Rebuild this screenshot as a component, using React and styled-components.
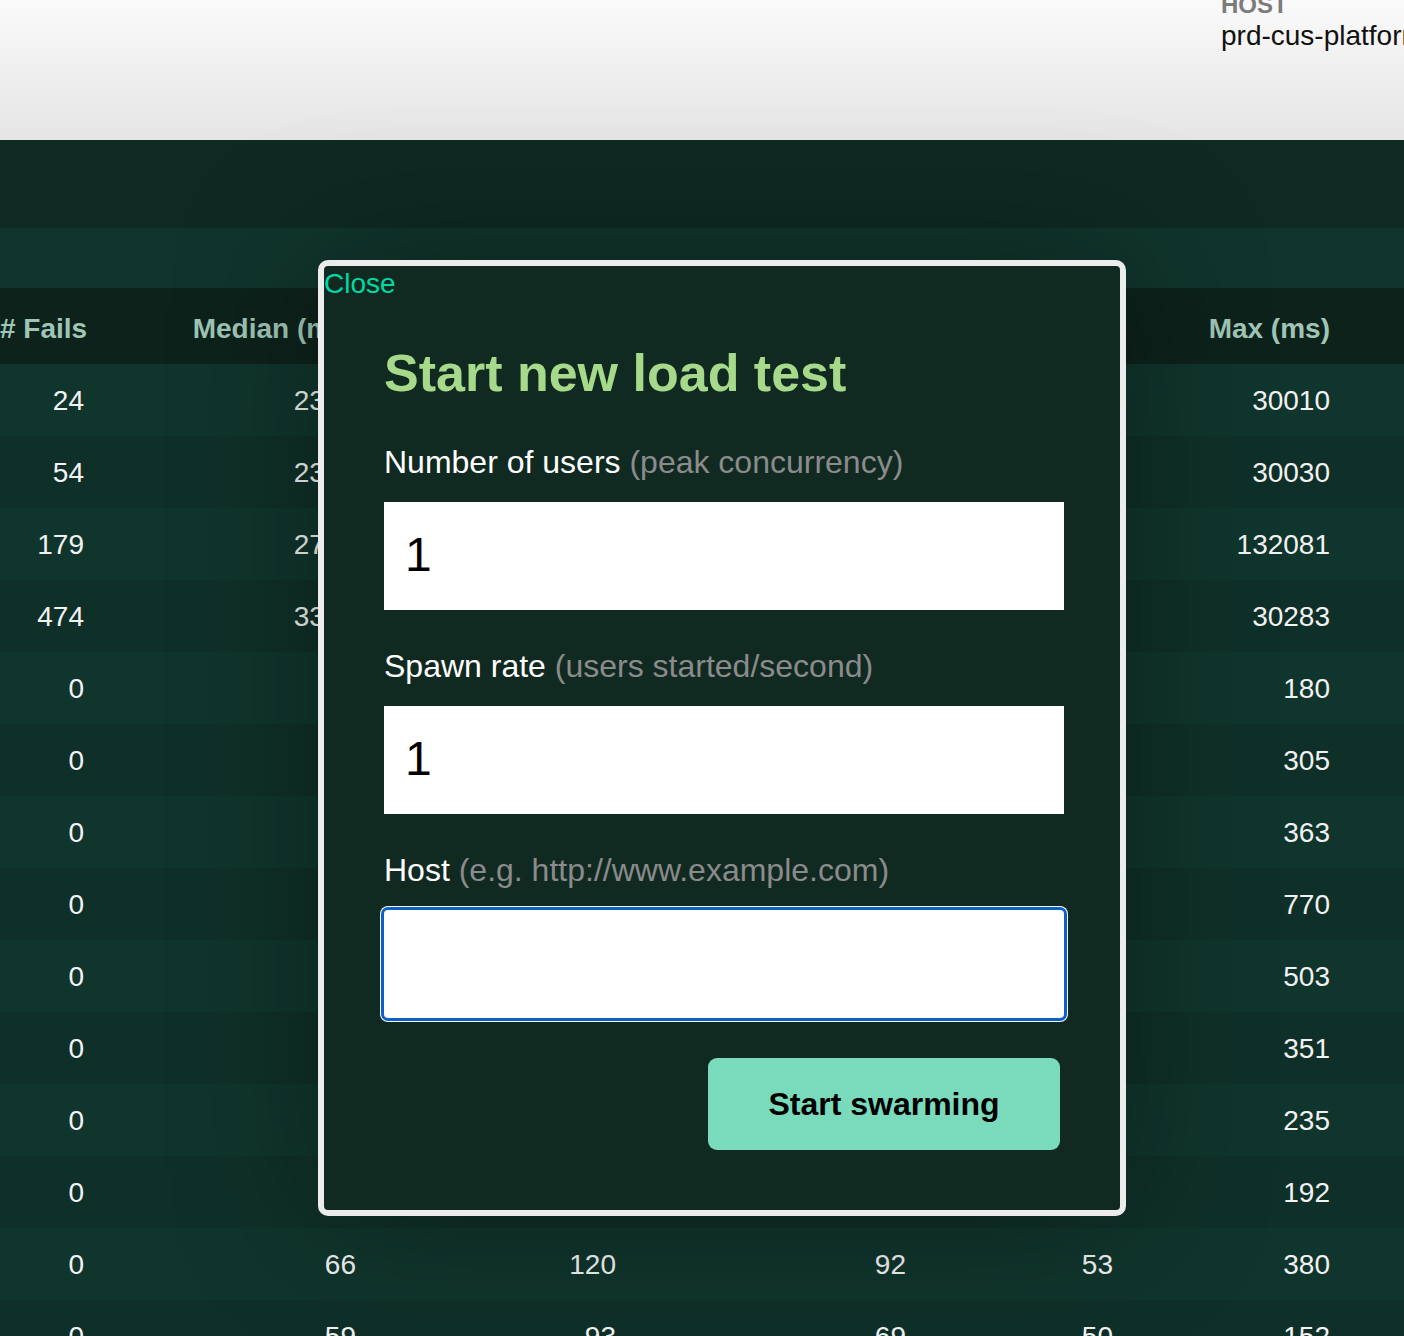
import React from "react";
import styled, { createGlobalStyle } from "styled-components";

const GlobalStyle = createGlobalStyle`
  html, body {
    margin: 0;
    padding: 0;
    background: #0f2a23;
    font-family: "Liberation Sans", Arial, sans-serif;
    overflow: hidden;
  }
`;

const Page = styled.div`
  position: relative;
  width: 1404px;
  height: 1336px;
  overflow: hidden;
`;

const Header = styled.header`
  height: 140px;
  background: linear-gradient(#fafafa, #e5e5e5);
  padding-left: 1221px;
  overflow: hidden;
  white-space: nowrap;
`;

const HostLabel = styled.div`
  margin-top: -7px;
  font-size: 24px;
  line-height: 24px;
  font-weight: bold;
  color: #7b7b7b;
`;

const HostValue = styled.div`
  margin-top: 3px;
  font-size: 28px;
  line-height: 32px;
  color: #111;
`;

const Nav = styled.div`
  height: 88px;
  background: #0f2a23;
`;

const SubBar = styled.div`
  height: 60px;
  background: #10352c;
`;

const cols = "84px 272px 260px 290px 207px 217px 1fr";

const HeadRow = styled.div`
  display: grid;
  grid-template-columns: ${cols};
  box-sizing: border-box;
  height: 76px;
  padding-top: 6px;
  align-items: center;
  background: #0d221b;
`;

const HeadCell = styled.div`
  text-align: right;
  white-space: nowrap;
  font-size: 28px;
  font-weight: bold;
  color: #9fc5b6;
`;

const Row = styled.div`
  display: grid;
  grid-template-columns: ${cols};
  box-sizing: border-box;
  height: 72px;
  padding-top: 2px;
  align-items: center;
  background: ${p => (p.odd ? "#0f3028" : "#10352c")};
`;

const Cell = styled.div`
  text-align: right;
  white-space: nowrap;
  font-size: 28px;
  color: #f2f2f2;
`;

const Modal = styled.div`
  position: absolute;
  left: 318px;
  top: 260px;
  width: 796px;
  height: 944px;
  border: 6px solid #ececec;
  border-radius: 10px;
  background: #102a22;
  box-shadow: 0 0 140px rgba(0, 0, 0, 0.35);
`;

const CloseLink = styled.a`
  display: block;
  width: fit-content;
  padding-top: 2px;
  font-size: 28px;
  line-height: 31px;
  color: #00d9a3;
  cursor: pointer;
`;

const Form = styled.form`
  width: 680px;
  margin-left: 60px;
`;

const Title = styled.h2`
  margin: 44px 0 41px;
  font-size: 52px;
  line-height: 60px;
  font-weight: bold;
  color: #a6da8a;
`;

const Field = styled.div`
  margin-bottom: 38px;
`;

const Label = styled.label`
  display: block;
  margin-bottom: 21px;
  font-size: 32px;
  line-height: 37px;
  color: #ffffff;
  white-space: nowrap;
`;

const Hint = styled.span`
  color: #8b8b8b;
`;

const Input = styled.input`
  display: block;
  box-sizing: border-box;
  width: 680px;
  height: 108px;
  padding: 0 16px 4px 21px;
  border: none;
  border-radius: ${p => (p.focused ? "4px" : "0")};
  background: #fff;
  font-family: "Liberation Sans", Arial, sans-serif;
  font-size: 48px;
  color: #000;
  outline: ${p => (p.focused ? "3px solid #0a62c9" : "none")};
  box-shadow: ${p => (p.focused ? "0 0 0 4px #ffffff" : "none")};
`;

const Actions = styled.div`
  display: flex;
  justify-content: flex-end;
  padding: 2px 4px 0 0;
`;

const Button = styled.button`
  width: 352px;
  height: 92px;
  border: none;
  border-radius: 9px;
  background: #79dbbc;
  font-family: "Liberation Sans", Arial, sans-serif;
  font-size: 32px;
  font-weight: bold;
  color: #000;
  cursor: pointer;
`;

const stats = [
  [24, 2310, 4800, 3510, 76, 30010],
  [54, 2340, 5200, 3802, 81, 30030],
  [179, 2710, 9100, 5123, 92, 132081],
  [474, 3320, 12000, 6045, 110, 30283],
  [0, 64, 110, 79, 48, 180],
  [0, 71, 130, 88, 52, 305],
  [0, 78, 150, 97, 55, 363],
  [0, 92, 210, 130, 60, 770],
  [0, 85, 170, 110, 57, 503],
  [0, 70, 120, 86, 51, 351],
  [0, 68, 110, 82, 50, 235],
  [0, 63, 100, 75, 49, 192],
  [0, 66, 120, 92, 53, 380],
  [0, 59, 93, 69, 50, 152],
];

const headers = ["# Fails", "Median (ms)", "90%ile (ms)", "Average (ms)", "Min (ms)", "Max (ms)"];

export default function App() {
  return (
    <Page>
      <GlobalStyle />
      <Header>
        <HostLabel>HOST</HostLabel>
        <HostValue>prd-cus-platform-loadtest.azurewebsites.net</HostValue>
      </Header>
      <Nav />
      <SubBar />
      <HeadRow>
        {headers.map(h => (
          <HeadCell key={h}>{h}</HeadCell>
        ))}
      </HeadRow>
      {stats.map((r, i) => (
        <Row key={i} odd={i % 2 === 1}>
          {r.map((v, j) => (
            <Cell key={j}>{v}</Cell>
          ))}
        </Row>
      ))}

      <Modal>
        <CloseLink>Close</CloseLink>
        <Form onSubmit={e => e.preventDefault()}>
          <Title>Start new load test</Title>
          <Field>
            <Label>
              Number of users <Hint>(peak concurrency)</Hint>
            </Label>
            <Input type="text" defaultValue="1" />
          </Field>
          <Field>
            <Label>
              Spawn rate <Hint>(users started/second)</Hint>
            </Label>
            <Input type="text" defaultValue="1" />
          </Field>
          <Field>
            <Label>
              Host <Hint>(e.g. http://www.example.com)</Hint>
            </Label>
            <Input type="text" defaultValue="" focused />
          </Field>
          <Actions>
            <Button type="submit">Start swarming</Button>
          </Actions>
        </Form>
      </Modal>
    </Page>
  );
}
